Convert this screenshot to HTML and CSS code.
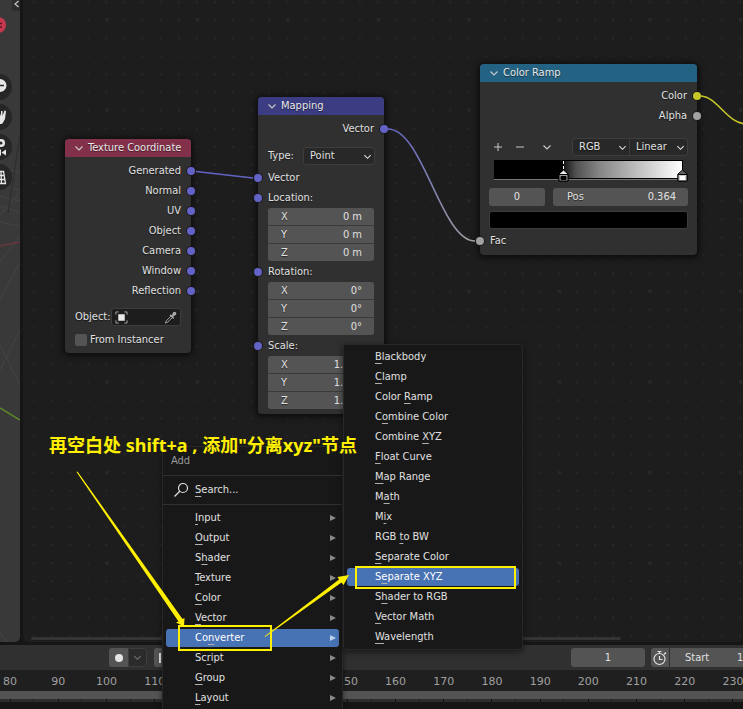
FILE: index.html
```html
<!DOCTYPE html>
<html lang="zh-CN">
<head>
<meta charset="utf-8">
<title>Shader Editor</title>
<link rel="stylesheet" href="styles.css">
</head>
<body>
<svg class="defs" aria-hidden="true">
  <defs>
    <symbol id="chev" viewBox="0 0 10 10"><path d="M1.500 3.500 5 7 8.500 3.500" fill="none" stroke="currentColor" stroke-width="1.200"/></symbol>
    <symbol id="tri" viewBox="0 0 6 8"><path d="M0 1 6 4 0 7z" fill="currentColor"/></symbol>
  </defs>
</svg>
<div class="app">
  <main class="workspace">
    <aside class="viewport">
      <svg class="viewport-art" aria-hidden="true">
        <g stroke="#444" fill="none">
          <path d="M0 168 20 172M0 186 20 190M0 196 20 201M0 206 20 212M0 222 20 226M0 262 20 236M0 300 20 262M0 345 20 385M0 215 20 192M0 370 20 330M0 633 8 642"/>
          <path d="M20 135 8 213" stroke="#2c2c2c"/>
        </g>
        <path d="M0 246 20 242" stroke="#7d353d"/>
        <path d="M0 408 20 420" stroke="#5d8a2a" stroke-width="1.500"/>
        <circle cx="-2" cy="25" r="8" fill="#c43850"/>
        <path d="M0 23.500h2M0 27h2" stroke="#5e1220" stroke-width="1.500"/>
        <g fill="#262626"><circle cx="-1" cy="87" r="13"/><circle cx="-1" cy="117" r="13"/><circle cx="-1" cy="147" r="13"/><circle cx="-1" cy="177" r="13"/></g>
        <circle cx="0" cy="85.500" r="6.500" fill="#e6e6e6"/><path d="M0 85.500h4" stroke="#262626" stroke-width="1.500"/>
        <path d="M0 124V113.500l1 2.500V111h1.500v5L4.500 110.500l1.500.5L5 119l-2.500 4.500-1.500.5z" fill="#e6e6e6"/>
        <circle cx="1" cy="143" r="4" fill="#e6e6e6"/><circle cx="1" cy="143" r="1.500" fill="#262626"/>
        <path d="M0 149.500h1v6H0zM1.500 152.500 6 149.500v6z" fill="#e6e6e6"/>
        <path d="M0 171.500h3.500l2 12H0M0 175.500h4M0 179.500h5M1 171.500l.5 12" fill="none" stroke="#e6e6e6" stroke-width="1.300"/>
      </svg>
      <button class="side-tab" aria-label="Show sidebar"><svg viewBox="0 0 8 11"><path d="M6.500 1 3 4 6.500 7" fill="none" stroke="#c8c8c8" stroke-width="1.200"/></svg></button>
    </aside>
    <section class="editor"><div class="scrollbar"></div></section>

    <div class="canvas">
      <svg class="layer" aria-hidden="true">
        <defs>
          <pattern id="dots" x="33" y="1" width="18.1" height="18.1" patternUnits="userSpaceOnUse"><rect width="2" height="2" fill="#272727"/></pattern>
          <pattern id="major" x="15" y="18" width="90.500" height="90.600" patternUnits="userSpaceOnUse"><rect width="3" height="3" fill="#292929"/></pattern>
        </defs>
        <g class="grid"><rect width="100%" height="100%" fill="url(#dots)"/><rect width="100%" height="100%" fill="url(#major)"/></g>
      </svg>

      <article class="node node-coord">
        <h2><svg><use href="#chev"/></svg>Texture Coordinate</h2>
        <ul class="sockets">
          <li class="out">Generated<i></i></li><li class="out">Normal<i></i></li><li class="out">UV<i></i></li><li class="out">Object<i></i></li><li class="out">Camera<i></i></li><li class="out">Window<i></i></li><li class="out">Reflection<i></i></li>
        </ul>
        <div class="object-row">
          <label for="obj">Object:</label>
          <div class="picker">
            <svg viewBox="0 0 14 14"><path d="M1 4V1h3M10 1h3v3M13 10v3h-3M4 13H1v-3" fill="none" stroke="#aaa"/><rect x="3.500" y="3.500" width="7" height="7" fill="#e8e8e8"/></svg>
            <input id="obj" type="text">
            <svg viewBox="0 0 14 14"><path d="M8 5 2.500 10.500 1.500 13 4 12 9.500 6.500" fill="none" stroke="#aaa"/><path d="M6.500 4 10.500 8M9 5.500 12 2.500" stroke="#aaa" stroke-width="1.500"/><circle cx="11.300" cy="2.800" r="2" fill="#aaa"/><path d="M8 4.500 9.800 3 11.300 4.500 9.800 6.500z" fill="#aaa"/></svg>
          </div>
        </div>
        <label class="check"><input type="checkbox">From Instancer</label>
      </article>

      <article class="node node-map">
        <h2><svg><use href="#chev"/></svg>Mapping</h2>
        <ul class="sockets"><li class="out">Vector<i></i></li></ul>
        <div class="type-row"><label for="type">Type:</label><span class="select"><select id="type"><option>Point</option></select><svg><use href="#chev"/></svg></span></div>
        <ul class="sockets inputs"><li>Vector<i></i></li><li>Location:<i></i></li></ul>
        <div class="fields"><label>X<input value="0 m"></label><label>Y<input value="0 m"></label><label>Z<input value="0 m"></label></div>
        <ul class="sockets"><li>Rotation:<i></i></li></ul>
        <div class="fields"><label>X<input value="0°"></label><label>Y<input value="0°"></label><label>Z<input value="0°"></label></div>
        <ul class="sockets"><li>Scale:<i></i></li></ul>
        <div class="fields"><label>X<input value="1.000"></label><label>Y<input value="1.000"></label><label>Z<input value="1.000"></label></div>
      </article>

      <article class="node node-ramp">
        <h2><svg><use href="#chev"/></svg>Color Ramp</h2>
        <ul class="sockets"><li class="out">Color<i class="yellow"></i></li><li class="out">Alpha<i class="gray"></i></li></ul>
        <div class="tools">
          <button aria-label="Add stop"><svg viewBox="0 0 10 10"><path d="M5 1v8M1 5h8" stroke="currentColor"/></svg></button>
          <button aria-label="Remove stop"><svg viewBox="0 0 10 10"><path d="M1 5h8" stroke="currentColor"/></svg></button>
          <button aria-label="Tools"><svg><use href="#chev"/></svg></button>
          <span class="select"><select aria-label="Color mode"><option>RGB</option></select><svg><use href="#chev"/></svg></span>
          <span class="select"><select aria-label="Interpolation"><option>Linear</option></select><svg><use href="#chev"/></svg></span>
        </div>
        <svg class="ramp" viewBox="0 0 200 22" role="img" aria-label="Ramp">
          <defs><linearGradient id="g"><stop offset="0" stop-color="#151515"/><stop offset=".1" stop-color="#505050"/><stop offset=".3" stop-color="#868686"/><stop offset=".6" stop-color="#bbb"/><stop offset="1" stop-color="#fff"/></linearGradient></defs>
          <rect x="4" y="0" width="189" height="19" fill="#000"/>
          <rect x="74" y="1" width="118" height="17" fill="url(#g)"/>
          <path d="M4 19.500h188" stroke="#777"/>
          <path d="M73.500 1v10" stroke="#fff" stroke-dasharray="3 2"/>
          <g stroke="#000"><path d="M69 21V14l4.500-4 4.500 4v7z" fill="#eee"/><path d="M69 14.500h9V21h-9z" fill="#999"/><path d="M71 16.500h5v3h-5z" fill="#000"/>
          <path d="M188 21V14l4.500-4 4.500 4v7z" fill="#666"/><path d="M188 14.500h9V21h-9z" fill="#ccc"/><path d="M190 16h5v4h-5z" fill="#fff" stroke="none"/></g>
        </svg>
        <div class="stop-row"><input class="index" aria-label="Stop index" value="0"><label class="pos">Pos<input value="0.364"></label></div>
        <button class="swatch" aria-label="Stop color"></button>
        <ul class="sockets"><li>Fac<i class="gray"></i></li></ul>
      </article>

      <svg class="layer" aria-hidden="true">
        <defs><linearGradient id="lk" gradientUnits="userSpaceOnUse" x1="384" y1="128" x2="480" y2="241"><stop offset="0" stop-color="#6363c7"/><stop offset="1" stop-color="#a1a1a1"/></linearGradient></defs>
        <g fill="none" stroke-width="1.500">
          <path d="M196 171.500 253 178" stroke="#6363c7"/>
          <path d="M388 129C423 129 441 241 475 241" stroke="url(#lk)"/>
          <path d="M701 96C718 97 727 124 747 124" stroke="#c7c729"/>
        </g>
      </svg>
    </div>
  </main>

  <footer class="timeline">
    <div class="controls">
      <button class="record" aria-label="Auto keying"><span></span></button><button class="keying" aria-label="Keying options"><svg><use href="#chev"/></svg></button>
      <button class="jump" aria-label="Jump to start"><svg viewBox="0 0 10 12"><path d="M0 1h2v10H0zM3 6 10 1v10z" fill="#e6e6e6"/></svg></button>
      <input class="frame" aria-label="Current frame" value="1">
      <div class="range">
        <button aria-label="Use preview range"><svg viewBox="0 0 16 16"><circle cx="7.500" cy="9" r="5.500" fill="none" stroke="#e0e0e0" stroke-width="1.200"/><path d="M7.500 6v3.500h3M5.500 1.500h4M7.500 1.500V4M12 4.500 14 2.500" fill="none" stroke="#e0e0e0" stroke-width="1.200"/></svg></button>
        <label>Start<input value="1"></label>
      </div>
    </div>
    <ol class="ruler"><li>80</li><li>90</li><li>100</li><li>110</li><li>120</li><li>130</li><li>140</li><li>150</li><li>160</li><li>170</li><li>180</li><li>190</li><li>200</li><li>210</li><li>220</li><li>230</li></ol>
  </footer>
</div>

<nav class="menu menu-add">
  <h3>Add</h3>
  <button class="search"><svg viewBox="0 0 16 16"><circle cx="10" cy="6" r="4.500" fill="none" stroke="currentColor" stroke-width="1.200"/><path d="M7 9 1.500 14.500" stroke="currentColor" stroke-width="1.200"/></svg><span><u>S</u>earch...</span></button>
  <div class="items">
    <button><span><u>I</u>nput</span><svg><use href="#tri"/></svg></button>
    <button><span><u>O</u>utput</span><svg><use href="#tri"/></svg></button>
    <button><span>S<u>h</u>ader</span><svg><use href="#tri"/></svg></button>
    <button><span><u>T</u>exture</span><svg><use href="#tri"/></svg></button>
    <button><span><u>C</u>olor</span><svg><use href="#tri"/></svg></button>
    <button><span><u>V</u>ector</span><svg><use href="#tri"/></svg></button>
    <button class="on"><span>Co<u>n</u>verter</span><svg><use href="#tri"/></svg></button>
    <button><span>Sc<u>r</u>ipt</span><svg><use href="#tri"/></svg></button>
    <button><span><u>G</u>roup</span><svg><use href="#tri"/></svg></button>
    <button><span><u>L</u>ayout</span><svg><use href="#tri"/></svg></button>
  </div>
</nav>
<nav class="menu menu-converter">
  <button><span><u>B</u>lackbody</span></button>
  <button><span><u>C</u>lamp</span></button>
  <button><span>Color <u>R</u>amp</span></button>
  <button><span>C<u>o</u>mbine Color</span></button>
  <button><span>Combine <u>X</u>YZ</span></button>
  <button><span><u>F</u>loat Curve</span></button>
  <button><span><u>M</u>ap Range</span></button>
  <button><span>M<u>a</u>th</span></button>
  <button><span>M<u>i</u>x</span></button>
  <button><span>RGB <u>t</u>o BW</span></button>
  <button><span><u>S</u>eparate Color</span></button>
  <button class="on"><span>S<u>e</u>parate XYZ</span></button>
  <button><span>S<u>h</u>ader to RGB</span></button>
  <button><span><u>V</u>ector Math</span></button>
  <button><span><u>W</u>avelength</span></button>
</nav>

<p class="note">再空白处 shift+a , 添加"分离xyz"节点</p>
<svg class="layer marks" aria-hidden="true">
  <g fill="none" stroke="#ffef00" stroke-width="2"><rect x="179" y="626" width="92" height="24"/><rect x="356" y="567" width="159" height="21"/></g>
  <g fill="#ffef00"><path d="M76.500 472 77.500 471.500 182.500 619 184.500 618 184 626.500 176 622.500 178.500 621.500z"/><path d="M265 637 264.700 636.300 339 579.500 337.500 577 349 575 343.500 585 341.500 582.500z"/></g>
</svg>
</body>
</html>
```
FILE: styles.css
```css
* { box-sizing: border-box; }
body {
  margin: 0;
  overflow: hidden;
  background: #161616;
  color: #e0e0e0;
  font: 11px/20px "DejaVu Sans Condensed", "DejaVu Sans", sans-serif;
}
h2, h3, p, ul, ol { margin: 0; padding: 0; font-size: inherit; font-weight: normal; list-style: none; }
button, input, select {
  appearance: none;
  margin: 0;
  padding: 0;
  border: 0;
  background: none;
  color: inherit;
  font: inherit;
}
input { min-width: 0; }
.defs { position: absolute; width: 0; height: 0; }
.layer { position: absolute; inset: 0; width: 100%; height: 100%; pointer-events: none; }
.app { display: flex; flex-direction: column; height: 100vh; }

.workspace { position: relative; flex: 1; min-height: 0; display: flex; gap: 3px; margin-bottom: 3px; }
.viewport { position: relative; width: 20px; overflow: hidden; border-radius: 0 0 5px 0; background: #393939; }
.viewport-art { display: block; width: 100%; height: 100%; }
.side-tab { position: absolute; top: 0; right: 0; width: 8px; height: 11px; background: #2c2c2c; border-radius: 0 0 0 3px; }
.side-tab svg { display: block; width: 8px; height: 11px; }
.editor { flex: 1; display: flex; align-items: flex-end; background: #1d1d1d; border-radius: 0 0 5px 5px; }
.scrollbar { width: 82%; height: 3px; margin: 0 0 2px 8px; border-radius: 2px; background: #343434; }
.canvas { position: absolute; inset: 0; overflow: hidden; }
.grid { clip-path: inset(0 0 4px 24px); }

.node { position: absolute; border-radius: 4px; background: #303030; box-shadow: 0 1px 6px 2px #0009; text-shadow: 0 1px 1px #0008; }
.node h2 { display: flex; align-items: center; gap: 4px; height: 18px; padding: 0 9px; border-radius: 4px 4px 0 0; color: #e8e8e8; white-space: nowrap; }
.node h2 svg { flex: none; width: 10px; height: 10px; color: #c8c8c8; }
.node-coord { left: 65px; top: 139px; width: 126px; padding-bottom: 3px; }
.node-coord h2 { background: #83314a; }
.node-map { left: 258px; top: 97px; width: 126px; padding-bottom: 5px; }
.node-map h2 { background: #3c3c83; }
.node-ramp { left: 480px; top: 64px; width: 217px; padding-bottom: 4px; }
.node-ramp h2 { background: #246283; }

.sockets { padding-top: 4px; }
.sockets li { position: relative; padding: 0 10px; }
.sockets .out { text-align: right; }
.sockets i { position: absolute; left: -4px; top: 6px; width: 8px; height: 8px; border-radius: 50%; background: #6363c7; box-shadow: 0 0 0 1px #1a1a1a; }
.sockets .out i { left: auto; right: -4px; }
.sockets .yellow { background: #c7c729; }
.sockets .gray { background: #a1a1a1; }

.object-row { display: flex; justify-content: space-between; align-items: center; padding: 6px 10px 0; }
.picker { display: flex; align-items: center; width: 70px; height: 18px; padding: 0 3px; border: 1px solid #3d3d3d; border-radius: 3px; background: #1d1d1d; }
.picker svg { flex: none; width: 13px; height: 13px; }
.picker input { flex: 1; width: 0; }
.check { display: flex; align-items: center; gap: 3px; padding: 3px 10px 0; }
.check input { width: 12px; height: 12px; border-radius: 2px; background: #545454; }

.select { position: relative; display: flex; align-items: center; height: 18px; border: 1px solid #3d3d3d; border-radius: 3px; background: #282828; }
.select select { width: 100%; height: 16px; padding-left: 6px; line-height: 14px; text-shadow: inherit; }
.select svg { position: absolute; right: 2px; top: 4px; width: 9px; height: 9px; pointer-events: none; }
.type-row { display: flex; align-items: center; justify-content: space-between; height: 20px; margin-top: 7px; padding: 0 9px 0 10px; }
.type-row .select { width: 72px; }
.inputs { padding-top: 2px; }
.fields { display: grid; gap: 1px; margin: 0 10px; overflow: hidden; border-radius: 3px; background: #3a3a3a; }
.fields label { display: flex; height: 17px; padding: 0 12px 0 13px; line-height: 17px; background: #545454; }
.fields input { flex: 1; width: 0; text-align: right; }
.fields + .sockets { padding-top: 1px; }

.tools { display: flex; align-items: center; height: 20px; margin-top: 11px; padding: 0 9px 0 13px; }
.tools button { display: flex; width: 22px; color: #c8c8c8; }
.tools button:nth-child(3) { width: auto; margin: 0 auto 0 5px; }
.tools button svg { width: 10px; height: 10px; }
.tools .select { width: 58px; border-radius: 3px 0 0 3px; }
.tools .select + .select { border-left: 0; border-radius: 0 3px 3px 0; }
.ramp { display: block; width: 200px; height: 22px; margin: 3px 0 0 10px; }
.stop-row { display: flex; gap: 8px; height: 18px; margin: 6px 9px 5px 9px; line-height: 18px; }
.index { width: 56px; border-radius: 3px; background: #545454; text-align: center; }
.pos { flex: 1; display: flex; padding: 0 12px 0 14px; border-radius: 3px; background: #545454; }
.pos input { flex: 1; width: 0; text-align: right; }
.swatch { display: block; width: calc(100% - 18px); height: 18px; margin: 0 9px; border: 1px solid #3d3d3d; border-radius: 3px; background: #000; }
.swatch + .sockets { padding-top: 2px; }

.controls { display: flex; align-items: center; height: 25px; padding-left: 109px; background: #303030; }
.record, .keying, .jump { display: flex; align-items: center; justify-content: center; width: 19px; height: 19px; background: #545454; border-radius: 3px 0 0 3px; }
.record span { width: 8px; height: 8px; border-radius: 50%; background: #e6e6e6; }
.keying { border: 1px solid #3d3d3d; border-radius: 0 3px 3px 0; background: #2b2b2b; color: #777; }
.keying svg { width: 9px; height: 9px; }
.jump { margin-left: 7px; }
.jump svg { width: 10px; height: 12px; }
.frame { width: 74px; height: 19px; margin-left: auto; border-radius: 3px; background: #545454; text-align: center; }
.range { display: flex; gap: 1px; width: 92px; height: 19px; margin-left: 6px; }
.range button { width: 18px; border-radius: 3px 0 0 3px; background: #545454; }
.range svg { display: block; width: 16px; height: 16px; margin: 0 auto; }
.range label { flex: 1; display: flex; align-items: center; justify-content: space-between; padding-left: 15px; background: #545454; }
.range input { width: 6px; text-align: left; }
.ruler { display: grid; grid-template-columns: repeat(16, 1fr); height: 39px; margin: 0 -14px; background: linear-gradient(#1f1f1f 0 21px, #545454 21px 29px, #2e2e2e 29px 32px, #161616 32px); color: #a0a0a0; font-family: "DejaVu Sans", sans-serif; line-height: 24px; text-align: center; }
.ruler li { height: 32px; background: linear-gradient(#111, #111) 50% 100% / 1px 3px no-repeat, linear-gradient(#1d1d1d, #1d1d1d) 100% 100% / 1px 3px no-repeat; }

.menu { position: absolute; border: 1px solid #282828; background: #181818; box-shadow: 0 2px 6px #0008; }
.menu button { display: flex; align-items: center; justify-content: space-between; width: calc(100% - 6px); height: 20px; margin: 0 3px; padding: 0 3px 0 29px; border-radius: 3px; text-align: left; }
.menu button svg { width: 6px; height: 8px; color: #8a8a8a; }
.menu u { text-decoration: underline 1px #b0b0b0; text-underline-offset: 3px; text-decoration-skip-ink: none; }
.menu .on { height: 18px; margin-block: 1px; background: #4772b3; color: #fff; }
.menu .on svg { color: #bcd0ee; }
.menu-add { left: 162px; top: 446px; bottom: 0; width: 181px; overflow: hidden; border-bottom: 0; }
.menu-add h3 { height: 29px; padding: 4px 8px; border-bottom: 1px solid #303030; color: #999; }
.menu .search { justify-content: flex-start; gap: 6px; height: 28px; padding-left: 7px; }
.menu .search svg { width: 16px; height: 16px; color: #e0e0e0; }
.items { padding-top: 3px; border-top: 1px solid #303030; }
.menu-converter { left: 343px; top: 344px; width: 180px; padding: 2px 0 2px; border-radius: 0 4px 4px 4px; }
.menu-converter button { padding-left: 28px; }

.note { position: absolute; left: 49px; top: 432px; color: #ffef00; font: bold 18px/26px "Noto Sans", "Noto Sans CJK SC", sans-serif; white-space: nowrap; }
.marks { z-index: 2; }
```
